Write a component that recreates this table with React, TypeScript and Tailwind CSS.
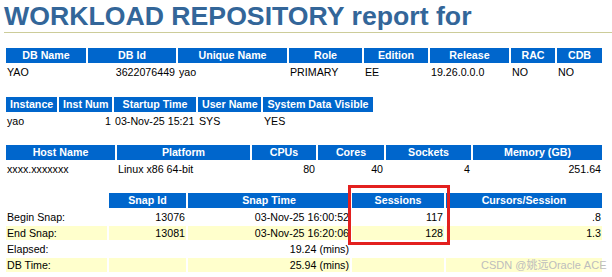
import React from "react";

const H = "bg-[#0066CC] text-white font-bold text-center px-1 pt-px pb-[2px] leading-[12px] whitespace-nowrap overflow-hidden";
const D = "px-px py-px leading-[12px] whitespace-nowrap text-black";
const DR = D + " text-right";
const Y = " bg-[#FFFFCC]";

export default function App() {
  return (
    <div className="relative w-[612px] h-[277px] overflow-hidden bg-white pl-[4px] text-[10.67px]" style={{ fontFamily: '"Liberation Sans", Arial, sans-serif' }}>
      <h1 className="w-[608px] h-[33px] border-b border-[#cccc99] text-[26.67px] leading-[32px] font-bold text-[#336699]">
        WORKLOAD REPOSITORY report for
      </h1>

      <div className="mt-[13px] grid w-[600px] grid-cols-[80px_88px_109px_73px_64px_79px_44px_45px] gap-[2px] p-[2px]">
        <div className={H}>DB Name</div>
        <div className={H}>DB Id</div>
        <div className={H}>Unique Name</div>
        <div className={H}>Role</div>
        <div className={H}>Edition</div>
        <div className={H}>Release</div>
        <div className={H}>RAC</div>
        <div className={H}>CDB</div>
        <div className={D}>YAO</div>
        <div className={DR}>3622076449</div>
        <div className={D}>yao</div>
        <div className={D}>PRIMARY</div>
        <div className={D}>EE</div>
        <div className={D}>19.26.0.0.0</div>
        <div className={D}>NO</div>
        <div className={D}>NO</div>
      </div>

      <div className="mt-[14px] grid w-max grid-cols-[51px_53px_82px_63px_110px] gap-[2px] p-[2px]">
        <div className={H}>Instance</div>
        <div className={H}>Inst Num</div>
        <div className={H}>Startup Time</div>
        <div className={H}>User Name</div>
        <div className={H}>System Data Visible</div>
        <div className={D}>yao</div>
        <div className={DR}>1</div>
        <div className={D}>03-Nov-25 15:21</div>
        <div className={D}>SYS</div>
        <div className={D}>YES</div>
      </div>

      <div className="mt-[13px] grid w-[600px] grid-cols-[109px_133px_64px_66px_85px_129px] gap-[2px] p-[2px]">
        <div className={H}>Host Name</div>
        <div className={H}>Platform</div>
        <div className={H}>CPUs</div>
        <div className={H}>Cores</div>
        <div className={H}>Sockets</div>
        <div className={H}>Memory (GB)</div>
        <div className={D}>xxxx.xxxxxxx</div>
        <div className={D}>Linux x86 64-bit</div>
        <div className={DR}>80</div>
        <div className={DR}>40</div>
        <div className={DR}>4</div>
        <div className={DR}>251.64</div>
      </div>

      <div className="mt-[13px] grid w-[600px] grid-cols-[101px_77px_162px_92px_156px] gap-[2px] p-[2px]">
        <div></div>
        <div className={H}>Snap Id</div>
        <div className={H}>Snap Time</div>
        <div className={H}>Sessions</div>
        <div className={H}>Cursors/Session</div>

        <div className={D}>Begin Snap:</div>
        <div className={DR}>13076</div>
        <div className={DR}>03-Nov-25 16:00:52</div>
        <div className={DR}>117</div>
        <div className={DR}>.8</div>

        <div className={D + Y}>End Snap:</div>
        <div className={DR + Y}>13081</div>
        <div className={DR + Y}>03-Nov-25 16:20:06</div>
        <div className={DR + Y}>128</div>
        <div className={DR + Y}>1.3</div>

        <div className={D}>Elapsed:</div>
        <div className={D}>&nbsp;</div>
        <div className={DR}>19.24 (mins)</div>
        <div className={D}>&nbsp;</div>
        <div className={D}>&nbsp;</div>

        <div className={D + Y}>DB Time:</div>
        <div className={D + Y}>&nbsp;</div>
        <div className={DR + Y}>25.94 (mins)</div>
        <div className={D + Y}>&nbsp;</div>
        <div className={D + Y}>&nbsp;</div>
      </div>

      <div className="absolute left-[348px] top-[185px] w-[102px] h-[60px] border-[3px] border-[#e3201f]"></div>

      <div
        className="absolute left-[481px] top-[258px] text-[11px] leading-[15px] text-[#bdbdbd] whitespace-nowrap"
        style={{ fontFamily: '"Liberation Sans", "Noto Sans CJK SC", sans-serif' }}
      >
        CSDN @姚远Oracle&nbsp;ACE
      </div>
    </div>
  );
}
